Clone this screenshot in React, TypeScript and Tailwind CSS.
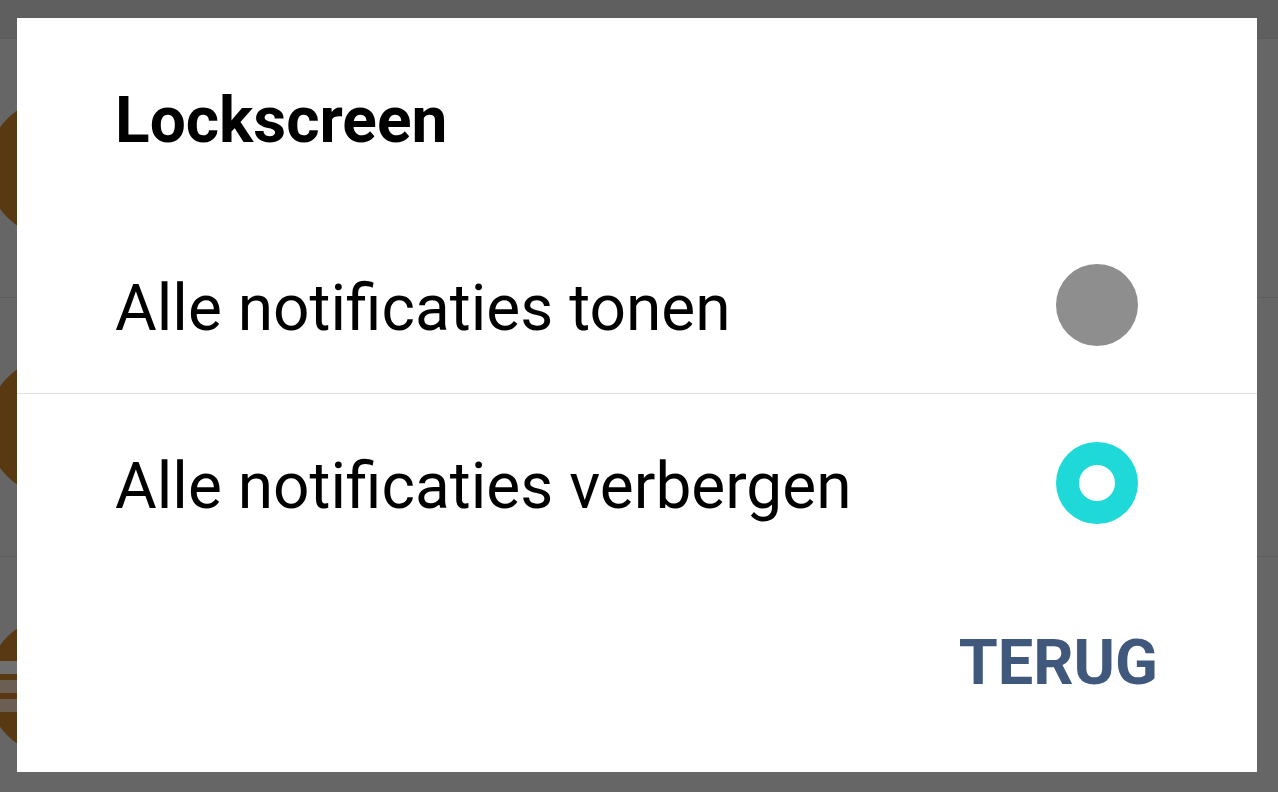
export default function App() {
  const options = [
    { label: 'Alle notificaties tonen', selected: false },
    { label: 'Alle notificaties verbergen', selected: true },
  ];

  return (
    <div className="relative w-[1278px] h-[792px] overflow-hidden bg-[#666666] font-['Roboto',sans-serif]">
      {/* Settings list behind the dim overlay */}
      <div className="h-[39px] bg-[#5f5f5f] border-b border-[#5a5a5a]" />
      <div className="flex flex-col">
        {[0, 1, 2].map((i) => (
          <div key={i} className="h-[259px] border-b border-[#5c5c5c] flex items-center">
            <div className="ml-[-13px] w-[140px] h-[140px] rounded-full bg-[#583912] flex items-center">
              {i === 2 && (
                <div className="ml-[13px] flex flex-col gap-[6px]">
                  <div className="w-[24px] h-[13px] bg-[#6f6f6f]" />
                  <div className="w-[24px] h-[13px] bg-[#6a5f52]" />
                  <div className="w-[24px] h-[13px] bg-[#6a5f52]" />
                </div>
              )}
            </div>
          </div>
        ))}
      </div>

      {/* Dialog */}
      <div className="absolute left-[17px] top-[18px] w-[1240px] h-[754px] bg-white flex flex-col">
        <div className="h-[199px] pl-[98px] pt-[63px]">
          <h1 className="text-[64px] leading-[80px] font-bold text-black">Lockscreen</h1>
        </div>

        {options.map((o, i) => (
          <div
            key={o.label}
            className={`h-[177px] flex items-center justify-between pl-[98px] pr-[119px] ${
              i === 0 ? 'border-b border-[#e2e2e2]' : ''
            }`}
          >
            <span className="mt-[8px] text-[64px] leading-[80px] text-black">{o.label}</span>
            {o.selected ? (
              <span className="w-[82px] h-[82px] rounded-full bg-[#1fd9d9] flex items-center justify-center">
                <span className="w-[36px] h-[36px] rounded-full bg-white" />
              </span>
            ) : (
              <span className="w-[82px] h-[82px] rounded-full bg-[#8e8e8e]" />
            )}
          </div>
        ))}

        <div className="flex-1 flex justify-end items-start pr-[99px] pt-[52px]">
          <button className="text-[63px] leading-[80px] font-bold text-[#40587b]">TERUG</button>
        </div>
      </div>
    </div>
  );
}
